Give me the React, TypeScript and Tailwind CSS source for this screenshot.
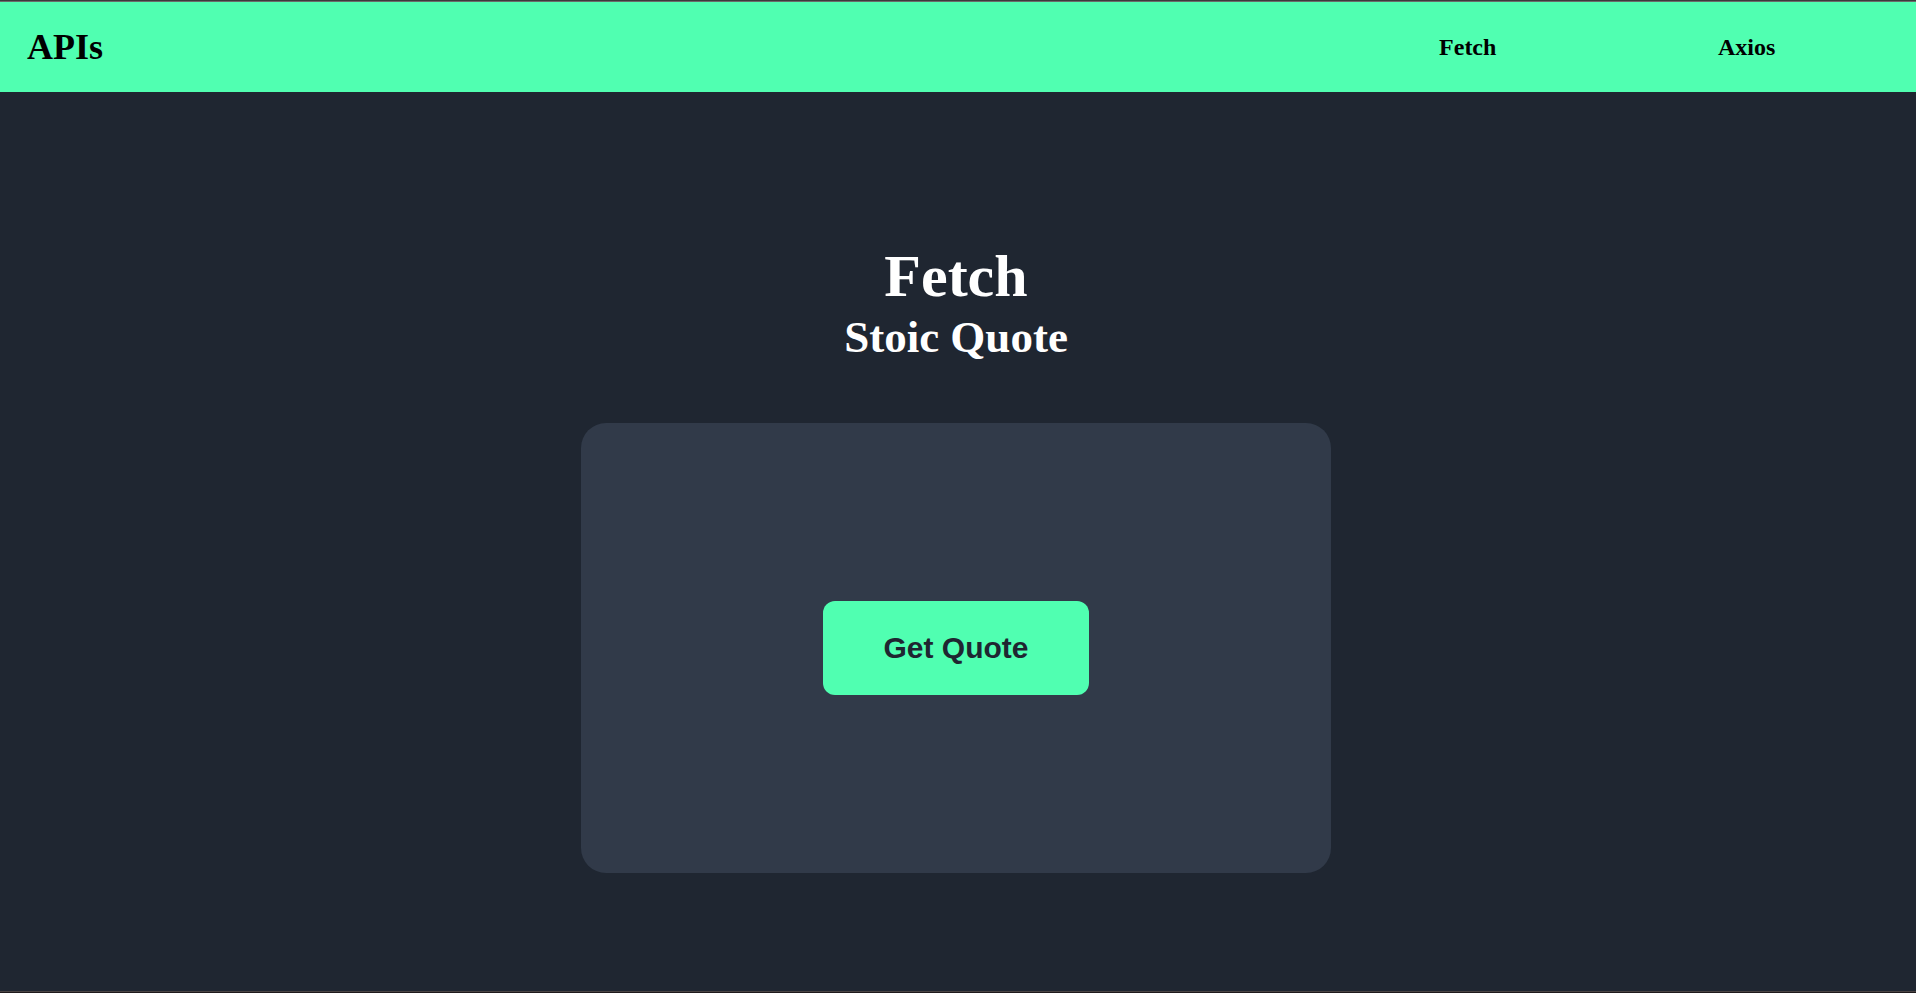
const links = [
  { label: "Fetch", href: "#fetch" },
  { label: "Axios", href: "#axios" },
];

function Header() {
  return (
    <header className="flex h-[90px] shrink-0 items-center justify-between bg-[#50ffb1] pr-[30px] pl-[27px] text-black">
      <a href="#home" className="text-[36px] leading-[41px] font-bold">
        APIs
      </a>
      <nav className="w-[30%]">
        <ul className="flex justify-around">
          {links.map((link) => (
            <li key={link.label}>
              <a href={link.href} className="text-[24px] leading-[28px] font-bold">
                {link.label}
              </a>
            </li>
          ))}
        </ul>
      </nav>
    </header>
  );
}

export default function App() {
  return (
    <div className="flex min-h-screen flex-col border-t border-b border-t-[#3c3c3c] border-b-[#1f1a1c] bg-[#1f2631] font-['Liberation_Serif',serif]">
      <div className="flex flex-1 flex-col border-t border-b border-t-[#6b6b6b] border-b-[#4a4444]">
        <Header />
        <main className="flex flex-1 flex-col items-center justify-center pt-8 pr-1 text-white">
          <h1 className="text-[60px] leading-[69px] font-bold">Fetch</h1>
          <h2 className="text-[45px] leading-[52px] font-bold">Stoic Quote</h2>
          <section className="mt-[60px] flex min-h-[450px] w-full max-w-[750px] items-center justify-center rounded-[25px] bg-[#313a49]">
            <button
              type="button"
              className="cursor-pointer rounded-[12px] bg-[#50ffb1] px-[60px] py-[30px] font-['Liberation_Sans',sans-serif] text-[30px] leading-[34px] font-bold text-[#1f2631]"
            >
              Get Quote
            </button>
          </section>
        </main>
      </div>
    </div>
  );
}
